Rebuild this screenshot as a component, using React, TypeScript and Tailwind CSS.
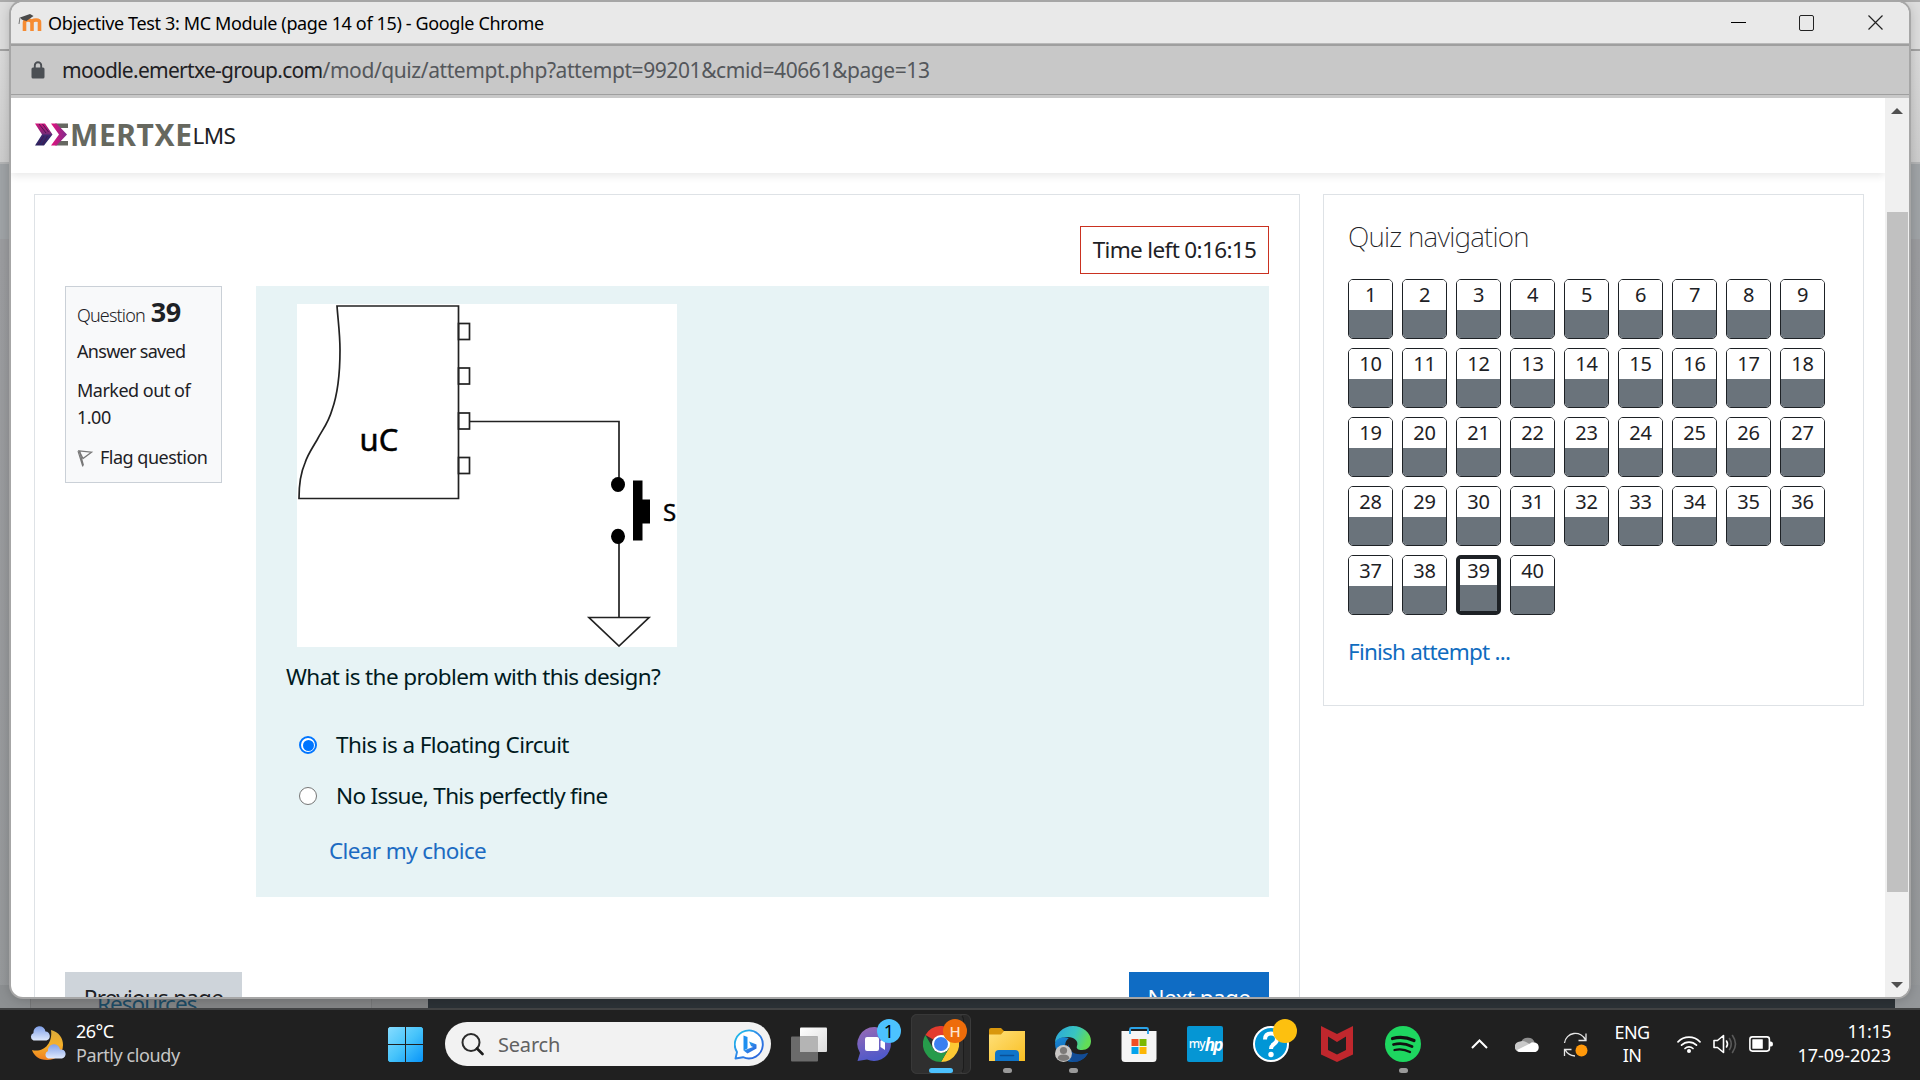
import React from "react";

const questions = Array.from({ length: 40 }, (_, i) => i + 1);
const CURRENT = 39;

/* ---------- desktop behind the window ---------- */

function Backdrop() {
  return (
    <div className="absolute inset-0 flex flex-col bg-[#9b9b9d]">
      <div className="h-[2px] bg-[#ababab]" />
      <div className="h-[47px] bg-[#dedede]" />
      <div className="h-[2px] bg-[#a3a3a3]" />
      <div className="h-[111px] bg-gradient-to-b from-[#dbdbdb] to-[#cecece]" />
      <div className="h-[2px] bg-[#b4b5b6]" />
      <div className="h-[75px] bg-[#a0a4a7]" />
      <div className="flex-1 bg-gradient-to-b from-[#9c9da0] to-[#96999b]" />
    </div>
  );
}

function BackdropFooter() {
  return (
    <div className="absolute inset-x-0 top-[985px] flex h-[23px] overflow-hidden">
      <div className="w-[30px] bg-[#8d9092]" />
      <div className="w-[342px] overflow-hidden border-x border-[#78797a] bg-[#858687] pl-[66px]">
        <div className="pt-[2px] text-[22.5px] leading-[34px] tracking-[-0.95px] text-[#1d4c66]">Resources</div>
      </div>
      <div className="w-[56px] bg-[#828384]" />
      <div className="w-[1467px] border-t-[14px] border-[#4b4f51] bg-[#2c3237]" />
      <div className="flex-1 bg-[#94979a]" />
    </div>
  );
}

/* ---------- browser window chrome ---------- */

function MoodleIcon() {
  return (
    <svg className="h-[20px] w-[24px]" viewBox="0 0 24 20">
      <path d="M6.500 18V9.500Q6.500 7 10 7T14 9.500V18M14 9.500Q14 7 18 7T21.500 9.500V18" fill="none" stroke="#f68b32" strokeWidth="3.600" />
      <path d="M2 4.500L12 1L15.500 3L8.500 8L4 6.800Z" fill="#4a4a4a" />
      <path d="M2 4.500L1 11" stroke="#777" strokeWidth="1" />
    </svg>
  );
}

function TitleBar() {
  return (
    <div className="flex h-[41px] shrink-0 items-center bg-[#e9e9e9] pl-[7px]">
      <MoodleIcon />
      <span className="ml-[6px] text-[18px] leading-[26px] tracking-[-0.36px] text-black">
        Objective Test 3: MC Module (page 14 of 15) - Google Chrome
      </span>
      <div className="ml-auto flex items-center gap-[53px] pr-[26px]">
        <div className="h-px w-[15px] bg-black" />
        <div className="h-[16px] w-[15px] rounded-[2px] border border-[#222]" />
        <svg className="ml-px h-[15px] w-[15px]" viewBox="0 0 15 15">
          <path d="M0.500 0.500L14.500 14.500M14.500 0.500L0.500 14.500" stroke="#222" strokeWidth="1.200" />
        </svg>
      </div>
    </div>
  );
}

function AddressBar() {
  return (
    <div className="flex h-[48px] shrink-0 items-center bg-[#c8c8c8] pl-[20px]">
      <svg className="h-[18px] w-[14px]" viewBox="0 0 14 18">
        <rect x="0.500" y="6.500" width="13" height="11" rx="1.500" fill="#4b4f54" />
        <path d="M3.800 7V4.500a3.200 3.200 0 0 1 6.400 0V7" fill="none" stroke="#4b4f54" strokeWidth="1.900" />
      </svg>
      <span className="ml-[17px] text-[21px] leading-[30px] text-[#54575b]">
        <span className="tracking-[-0.71px] text-[#1f2124]">moodle.emertxe-group.com</span>
        <span className="tracking-[-0.42px]">/mod/quiz/attempt.php?attempt=99201&amp;cmid=40661&amp;page=13</span>
      </span>
    </div>
  );
}

function Scrollbar() {
  return (
    <div className="flex w-[24px] flex-col items-center bg-[#f0f0f0]">
      <svg className="mt-[10px] h-[6px] w-[12px]" viewBox="0 0 12 6">
        <path d="M6 0L12 6H0Z" fill="#505050" />
      </svg>
      <div className="mt-[98px] h-[680px] w-[21px] bg-[#c1c1c1]" />
      <svg className="mt-[90px] h-[6px] w-[12px]" viewBox="0 0 12 6">
        <path d="M0 0H12L6 6Z" fill="#505050" />
      </svg>
    </div>
  );
}

/* ---------- page ---------- */

function SiteHeader() {
  return (
    <div className="relative z-10 flex h-[75px] shrink-0 items-start bg-white pl-[24px] pt-[20px] shadow-[0_3px_8px_rgba(0,0,0,0.09)]">
      <svg className="mt-[5px] h-[24px] w-[34px]" viewBox="0 0 34 24">
        <defs>
          <linearGradient id="chev" x1="0" y1="0" x2="0" y2="1">
            <stop offset="0" stopColor="#d4147c" />
            <stop offset="0.45" stopColor="#7a2a78" />
            <stop offset="0.550" stopColor="#3a2a70" />
            <stop offset="1" stopColor="#2a2560" />
          </linearGradient>
          <linearGradient id="sig" x1="0" y1="0" x2="1" y2="0">
            <stop offset="0" stopColor="#e5127d" />
            <stop offset="1" stopColor="#7d2c8c" />
          </linearGradient>
        </defs>
        <path d="M0 0.500H10L17.500 11.500L9 22.500H0L7 11.500Z" fill="url(#chev)" />
        <path d="M4 1L11 10M7.500 1L13.500 9M3 22L9 13M7 22L12.500 13" stroke="#45164f" strokeWidth="0.900" />
        <path d="M20 0.500H33V5H25ZM20 22.500H33V18H25Z" fill="#666861" />
        <path d="M16 0.500H21.500L32 11.500L21.500 22.500H16L24 11.500Z" fill="url(#sig)" />
      </svg>
      <span className="ml-[1px] text-[30px] font-bold leading-[34px] tracking-[0.6px] text-[#66685f]">MERTXE</span>
      <span className="text-[22.5px] leading-[35px] tracking-[-0.7px] text-[#1d2125]">LMS</span>
    </div>
  );
}

function QuestionInfo() {
  return (
    <div className="h-[197px] w-[157px] shrink-0 border border-[#cad0d7] bg-[#f8f9fa] pl-[11px] pt-[11px] text-[18px] leading-[27px] text-[#1d2125]">
      <div className="flex h-[27px] items-baseline">
        <span className="font-light tracking-[-0.85px]">Question</span>
        <span className="ml-[6px] text-[27px] font-bold leading-[27px] tracking-[-0.5px]">39</span>
      </div>
      <div className="mt-[13px] tracking-[-0.7px]">Answer saved</div>
      <div className="mt-[12px] tracking-[-0.5px]">
        Marked out of
        <br />
        1.00
      </div>
      <div className="mt-[13px] flex items-center">
        <svg className="h-[18px] w-[17px]" viewBox="0 0 17 18">
          <path d="M1 2L5.800 17.500M2.500 2L6.500 16.500" fill="none" stroke="#777" strokeWidth="1.100" />
          <path d="M2 1.800L14.500 3.200L6 9.500Z" fill="none" stroke="#777" strokeWidth="1.300" />
        </svg>
        <span className="ml-[6px] whitespace-nowrap tracking-[-0.5px]">Flag question</span>
      </div>
    </div>
  );
}

function CircuitDiagram() {
  return (
    <svg className="h-[343px] w-[380px] bg-white" viewBox="0 0 380 343">
      <g fill="none" stroke="#222" strokeWidth="1.700">
        <path d="M2 194.500H161.500V2H40C41 16 43 30 43 46C43 70 40 92 35 106C31 120 25 126 20 136C14 146 10 152 8 159C4 168 2 180 2 194.500Z" />
        <rect x="161.500" y="19.500" width="11" height="16" />
        <rect x="161.500" y="64" width="11" height="16" />
        <rect x="161.500" y="109" width="11" height="16" />
        <rect x="161.500" y="153.500" width="11" height="16" />
        <path d="M172.500 117.500H322V176M322 238V313.500" />
        <path d="M292 313.500H352L322 342Z" />
      </g>
      <ellipse cx="321" cy="180.500" rx="7" ry="7.600" />
      <ellipse cx="321" cy="232.300" rx="7" ry="7.600" />
      <rect x="336" y="176.500" width="9.500" height="60" />
      <rect x="345" y="195.500" width="8" height="24" />
      <text x="62.500" y="146.500" fontSize="31" fill="#000" stroke="#000" strokeWidth="0.500" fontFamily="'Noto Sans', sans-serif">uC</text>
      <text x="366" y="216.500" fontSize="24" fill="#000" stroke="#000" strokeWidth="0.400" fontFamily="'Noto Sans', sans-serif">S</text>
    </svg>
  );
}

function Choice({ label, checked }: { label: string; checked?: boolean }) {
  return (
    <label className="flex h-[34px] items-center">
      <span
        className={
          checked
            ? "flex h-[18px] w-[18px] items-center justify-center rounded-full border-2 border-[#0075ff] bg-white"
            : "h-[18px] w-[18px] rounded-full border-[1.5px] border-[#767676] bg-white"
        }
      >
        {checked && <span className="h-[11px] w-[11px] rounded-full bg-[#0075ff]" />}
      </span>
      <span className={checked ? "ml-[19px] tracking-[-0.6px]" : "ml-[19px] tracking-[-0.69px]"}>{label}</span>
    </label>
  );
}

function Formulation() {
  return (
    <div className="h-[611px] flex-1 bg-[#e7f3f5] pt-[18px] text-[22.5px] leading-[34px] text-[#001a1e]">
      <div className="ml-[41px] h-[343px]">
        <CircuitDiagram />
      </div>
      <p className="ml-[30px] mt-[13px] tracking-[-0.6px]">What is the problem with this design?</p>
      <div className="ml-[43px] mt-[34px] flex flex-col gap-[17px]">
        <Choice label="This is a Floating Circuit" checked />
        <Choice label="No Issue, This perfectly fine" />
      </div>
      <a className="ml-[73px] mt-[21px] block tracking-[-0.62px] text-[#1c6bc2]">Clear my choice</a>
    </div>
  );
}

function QuizCard() {
  return (
    <div className="w-[1266px] shrink-0 border border-[#dee2e6] px-[30px] pt-[31px]">
      <div className="flex justify-end">
        <div className="flex h-[48px] w-[189px] items-center justify-center border border-[#ca3120] text-[22.5px] leading-[34px] tracking-[-0.64px] text-[#1d2125]">
          Time left 0:16:15
        </div>
      </div>
      <div className="mt-[12px] flex gap-[34px]">
        <QuestionInfo />
        <Formulation />
      </div>
      <div className="mt-[75px] flex h-[56px] justify-between text-[22.5px] leading-[34px]">
        <button className="flex w-[177px] justify-center bg-[#ced4da] pt-[9px] tracking-[-0.75px] text-[#1d2125]">Previous page</button>
        <button className="flex w-[140px] justify-center bg-[#0f6cc4] pt-[9px] tracking-[-0.6px] text-white">Next page</button>
      </div>
    </div>
  );
}

function QuizNavigation() {
  return (
    <div className="h-[512px] w-[541px] shrink-0 border border-[#dee2e6] pl-[24px] pt-[24px] text-[#1d2125]">
      <h2 className="text-[28px] font-extralight leading-[34px] tracking-[-0.75px]">Quiz navigation</h2>
      <div className="mt-[26px] grid w-[477px] grid-cols-9 gap-[9px]">
        {questions.map((n) => (
          <div
            key={n}
            className={
              n === CURRENT
                ? "flex h-[60px] flex-col overflow-hidden rounded-[5px] border-4 border-[#1d2125] text-center text-[20px] leading-[24px] tracking-[-0.3px]"
                : "flex h-[60px] flex-col overflow-hidden rounded-[5px] border border-[#1d2125] text-center text-[20px] leading-[30px] tracking-[-0.3px]"
            }
          >
            <span className="flex-1 basis-0 bg-white">{n}</span>
            <span className="flex-1 basis-0 bg-[#6a737b]" />
          </div>
        ))}
      </div>
      <a className="mt-[20px] block text-[22.5px] leading-[34px] tracking-[-0.78px] text-[#0f6cbf]">Finish attempt ...</a>
    </div>
  );
}

function BrowserWindow() {
  return (
    <div className="absolute left-[11px] top-[2px] flex h-[995px] w-[1898px] flex-col overflow-hidden rounded-[12px] bg-white shadow-[0_0_0_2px_#a6a6a6,0_2px_14px_rgba(0,0,0,0.25)]">
      <TitleBar />
      <div className="h-px shrink-0 bg-[#b9b9b9]" />
      <div className="h-[2px] shrink-0 bg-[#9f9f9f]" />
      <AddressBar />
      <div className="h-px shrink-0 bg-[#9f9f9f]" />
      <div className="h-[3px] shrink-0 bg-[#c8c8c8]" />
      <div className="flex h-[899px] shrink-0">
        <div className="flex h-[899px] w-[1874px] flex-col overflow-hidden">
          <SiteHeader />
          <div className="flex shrink-0 items-start gap-[23px] pl-[23px] pt-[21px]">
            <QuizCard />
            <QuizNavigation />
          </div>
        </div>
        <Scrollbar />
      </div>
    </div>
  );
}

/* ---------- taskbar ---------- */

function WeatherIcon() {
  return (
    <svg className="h-[36px] w-[38px]" viewBox="0 0 38 36">
      <defs>
        <linearGradient id="moon" x1="0" y1="0" x2="0" y2="1">
          <stop offset="0" stopColor="#d9a93a" />
          <stop offset="0.500" stopColor="#f6b12a" />
          <stop offset="1" stopColor="#f07f1d" />
        </linearGradient>
        <linearGradient id="cl" x1="0" y1="0" x2="0" y2="1">
          <stop offset="0" stopColor="#7f9fe8" />
          <stop offset="1" stopColor="#dfe9fc" />
        </linearGradient>
      </defs>
      <path d="M22 4C30 6 34 12 34 19C34 28 27 34 18 34C10 34 5 30 3 24C14 27 24 18 22 4Z" fill="url(#moon)" />
      <path d="M4.500 14.500a4 4 0 0 1 0-7.500a6 6 0 0 1 12-1.500a4.600 4.600 0 0 1 1 9Z" fill="url(#cl)" />
      <path d="M19 32.500a4 4 0 0 1 0-7.500a6 6 0 0 1 12-1.500a4.600 4.600 0 0 1 2 9Z" fill="url(#cl)" />
    </svg>
  );
}

function WindowsLogo() {
  return (
    <svg className="h-[35px] w-[35px]" viewBox="0 0 35 35">
      <defs>
        <linearGradient id="win" x1="0" y1="0" x2="1" y2="1">
          <stop offset="0" stopColor="#86dcff" />
          <stop offset="0.500" stopColor="#47c4fb" />
          <stop offset="1" stopColor="#0894f8" />
        </linearGradient>
      </defs>
      <path d="M1.500 0H17V17H0V1.500ZM18 0H33.500L35 1.500V17H18ZM0 18H17V35H1.500L0 33.500ZM18 18H35V33.500L33.500 35H18Z" fill="url(#win)" />
    </svg>
  );
}

function BingIcon() {
  return (
    <svg className="h-[31px] w-[31px]" viewBox="0 0 31 31">
      <defs>
        <linearGradient id="bing" x1="0" y1="0" x2="1" y2="1">
          <stop offset="0" stopColor="#1fc8ea" />
          <stop offset="0.500" stopColor="#2f86e8" />
          <stop offset="1" stopColor="#2a5cd8" />
        </linearGradient>
      </defs>
      <path d="M1.500 29.500L3 23A14 14 0 1 1 9 28.200Z" fill="#fff" stroke="url(#bing)" strokeWidth="1.900" strokeLinejoin="round" />
      <path d="M9.500 6.500L13.500 8V19.500L9.500 21.500Z" fill="#1d8ff0" />
      <path d="M9.500 21.500L13.500 24.500L22.500 19.500V15.500L15 12.500L17 17L19 18Z" fill="url(#bing)" />
    </svg>
  );
}

function TaskViewIcon() {
  return (
    <svg className="h-[35px] w-[36px]" viewBox="0 0 36 35">
      <defs>
        <linearGradient id="tv" x1="0" y1="0" x2="1" y2="1">
          <stop offset="0" stopColor="#fff" />
          <stop offset="1" stopColor="#dcdcdc" />
        </linearGradient>
      </defs>
      <rect x="9" y="0.500" width="27" height="24.500" rx="1" fill="url(#tv)" />
      <rect x="0" y="9.500" width="27" height="25" rx="1" fill="#6b6b6b" />
      <rect x="9" y="9.500" width="18" height="15.500" fill="#b4b4b4" />
    </svg>
  );
}

function ChatIcon() {
  return (
    <svg className="h-[36px] w-[36px]" viewBox="0 0 36 36">
      <defs>
        <linearGradient id="chat" x1="0" y1="0" x2="0.300" y2="1">
          <stop offset="0" stopColor="#9a6bb5" />
          <stop offset="1" stopColor="#5059c9" />
        </linearGradient>
      </defs>
      <path d="M18 1A17 17 0 1 1 10 33.500L0.500 35L3 27A17 17 0 0 1 18 1Z" fill="url(#chat)" />
      <rect x="8" y="11" width="14" height="14" rx="2" fill="#fff" />
      <path d="M23.500 15L28 12V24L23.500 21Z" fill="#fff" />
    </svg>
  );
}

function ChromeIcon() {
  return (
    <svg className="h-[36px] w-[36px]" viewBox="0 0 36 36">
      <path d="M18 18L2.400 9A18 18 0 0 1 33.600 9Z" fill="#e33b2e" />
      <path d="M18 9H33.600A18 18 0 0 1 18 36L25.800 22.500Z" fill="#fcc934" />
      <path d="M18 36A18 18 0 0 1 2.400 9L10.200 22.500A9 9 0 0 0 25.800 22.500Z" fill="#269b4b" />
      <circle cx="18" cy="18" r="9" fill="#fff" />
      <circle cx="18" cy="18" r="7" fill="#3b7ff0" />
    </svg>
  );
}

function FolderIcon() {
  return (
    <svg className="h-[36px] w-[36px]" viewBox="0 0 36 36">
      <defs>
        <linearGradient id="fold" x1="0" y1="0" x2="1" y2="1">
          <stop offset="0" stopColor="#ffe07a" />
          <stop offset="1" stopColor="#f9bf22" />
        </linearGradient>
      </defs>
      <path d="M0 4Q0 2 2 2H12L15 5H34Q36 5 36 7V12H0Z" fill="#d9970d" />
      <path d="M0 8.500H12L15 5H36V35H0Z" fill="url(#fold)" />
      <path d="M6 35V28Q6 24 10 24H26Q30 24 30 28V35Z" fill="#0f74c9" />
      <path d="M11.500 29.500H24.500" stroke="#0a4f96" strokeWidth="1.600" strokeLinecap="round" />
    </svg>
  );
}

function EdgeIcon() {
  return (
    <svg className="h-[36px] w-[36px]" viewBox="0 0 36 36">
      <defs>
        <linearGradient id="eg1" x1="0" y1="0" x2="1" y2="0.300">
          <stop offset="0" stopColor="#2aa5dc" />
          <stop offset="0.600" stopColor="#39c5c0" />
          <stop offset="1" stopColor="#62dc56" />
        </linearGradient>
        <linearGradient id="eg2" x1="0" y1="0" x2="0.500" y2="1">
          <stop offset="0" stopColor="#1a8ad8" />
          <stop offset="1" stopColor="#0c59a4" />
        </linearGradient>
      </defs>
      <path d="M0 17C0 8 8 0 18 0C28 0 36 7 36 15C36 21 32 24 27 24C23 24 21 22.500 22 20C24 15 19 11 13 11C7 11 2 13 0 17Z" fill="url(#eg1)" />
      <path d="M0 17C2 12 8 10 14 12C11 14 9 18 11 24C13 30 20 33 33 27C30 33 24 36 18 36C8 36 0 28 0 17Z" fill="url(#eg2)" />
      <path d="M14 18C13 25 20 31 33 27C30 33 24 36 19 36C12 33 10 24 14 18Z" fill="#124c96" />
      <circle cx="8.500" cy="27.500" r="8.500" fill="#c9c7c5" />
      <circle cx="8.500" cy="24.500" r="3.600" fill="#7d7a78" />
      <path d="M2.500 32.500Q3 28.500 8.500 28.500T14.500 32.500Q12 35 8.500 35T2.500 32.500Z" fill="#7d7a78" />
    </svg>
  );
}

function StoreIcon() {
  return (
    <svg className="h-[36px] w-[36px]" viewBox="0 0 36 36">
      <path d="M0.500 5H35.500V32.500Q35.500 36 32 36H4Q0.500 36 0.500 32.500Z" fill="#f5f5f5" />
      <path d="M9 8V3.500Q9 2 10.500 2H25.500Q27 2 27 3.500V8" fill="none" stroke="#2ba3e8" strokeWidth="1.900" />
      <rect x="10.500" y="13" width="7" height="7" fill="#f04e26" />
      <rect x="18.500" y="13" width="7" height="7" fill="#7cb802" />
      <rect x="10.500" y="21" width="7" height="7" fill="#04a3ec" />
      <rect x="18.500" y="21" width="7" height="7" fill="#fcb605" />
    </svg>
  );
}

function HpIcon() {
  return (
    <div className="flex h-[36px] w-[36px] items-center justify-center rounded-[2px] bg-[#0596d4] italic leading-none text-white">
      <span className="text-[12px] font-medium not-italic tracking-[-0.8px]">my</span>
      <span className="text-[17px] font-bold tracking-[-2px]">hp</span>
    </div>
  );
}

function HelpIcon() {
  return (
    <svg className="h-[36px] w-[36px]" viewBox="0 0 36 36">
      <circle cx="18" cy="18" r="17" fill="#0096d6" stroke="#fff" strokeWidth="2" />
      <path d="M12 13.500Q12 7.500 18 7.500T24 13Q24 16 21 18T18 23" fill="none" stroke="#fff" strokeWidth="4" />
      <circle cx="18" cy="28.500" r="2.700" fill="#fff" />
    </svg>
  );
}

function McAfeeIcon() {
  return (
    <svg className="h-[36px] w-[32px]" viewBox="0 0 32 36">
      <path d="M0 0L16 8L32 0V28.500L16 36L0 28.500ZM7 10.500V24L16 28.500L25 24V10.500L16 16Z" fill="#c0272d" fillRule="evenodd" />
    </svg>
  );
}

function SpotifyIcon() {
  return (
    <svg className="h-[36px] w-[36px]" viewBox="0 0 36 36">
      <circle cx="18" cy="18" r="18" fill="#1ed760" />
      <g fill="none" stroke="#111" strokeLinecap="round">
        <path d="M7.500 12.500Q18 9.500 29 14.500" strokeWidth="3.200" />
        <path d="M8.500 18.500Q18 16 27 20.500" strokeWidth="2.800" />
        <path d="M9.500 24Q17.500 22 25 26" strokeWidth="2.300" />
      </g>
    </svg>
  );
}

function AppSlot({ children, badge, running }: { children: React.ReactNode; badge?: React.ReactNode; running?: boolean }) {
  return (
    <div className="relative flex h-[70px] w-[66px] items-center justify-center">
      {children}
      {badge}
      {running && <div className="absolute bottom-[6px] left-[29px] h-[5px] w-[9px] rounded-full bg-[#9a9a9a]" />}
    </div>
  );
}

function Taskbar() {
  return (
    <div className="absolute inset-x-0 bottom-0 flex h-[72px] items-center border-t-2 border-[#414243] bg-[#202020] pb-[2px]">
      <div className="flex h-[70px] w-[388px] items-center pl-[29px]">
        <WeatherIcon />
        <div className="ml-[9px] pb-[2px] text-[18px] leading-[24px]">
          <div className="tracking-[-0.5px] text-white">26°C</div>
          <div className="tracking-[-0.4px] text-[#c6c6c6]">Partly cloudy</div>
        </div>
      </div>
      <WindowsLogo />
      <div className="ml-[22px] flex h-[44px] w-[326px] items-center rounded-full bg-[#f2f2f2] pl-[16px] pr-[6px]">
        <svg className="h-[23px] w-[23px]" viewBox="0 0 23 23">
          <circle cx="10" cy="9.500" r="8.500" fill="none" stroke="#2b2b2b" strokeWidth="2" />
          <path d="M16 15.500L21.500 21" stroke="#1d1d1d" strokeWidth="2.600" strokeLinecap="round" />
        </svg>
        <span className="ml-[14px] pt-px text-[20px] leading-[28px] tracking-[-0.2px] text-[#616161]">Search</span>
        <span className="ml-auto">
          <BingIcon />
        </span>
      </div>
      <div className="ml-[5px] flex">
        <AppSlot>
          <TaskViewIcon />
        </AppSlot>
        <AppSlot
          badge={
            <div className="absolute left-[35px] top-[10px] flex h-[24px] w-[24px] items-center justify-center rounded-full bg-[#4cc2ff] text-[18px] leading-none text-black">
              1
            </div>
          }
        >
          <ChatIcon />
        </AppSlot>
        <div className="relative flex h-[70px] w-[66px] items-center justify-center">
          <div className="absolute left-[3px] top-[5px] h-[60px] w-[60px] rounded-[6px] border border-[#3b3b3b] bg-[#2a2a2a]" />
          <div className="absolute left-[3px] top-[5px] h-[60px] w-[53px] rounded-[6px] border border-[#383838] border-r-[#1c1c1c] bg-[#2f2f2f]" />
          <div className="relative">
            <ChromeIcon />
          </div>
          <div className="absolute left-[35px] top-[10px] flex h-[24px] w-[24px] items-center justify-center rounded-full bg-[#ee6c0a] text-[15px] font-medium leading-none text-[#fde3d0]">
            H
          </div>
          <div className="absolute bottom-[6px] left-[21px] h-[5px] w-[24px] rounded-full bg-[#4cc2ff]" />
        </div>
        <AppSlot running>
          <FolderIcon />
        </AppSlot>
        <AppSlot running>
          <EdgeIcon />
        </AppSlot>
        <AppSlot>
          <StoreIcon />
        </AppSlot>
        <AppSlot>
          <HpIcon />
        </AppSlot>
        <AppSlot badge={<div className="absolute left-[35px] top-[10px] h-[24px] w-[24px] rounded-full bg-[#fdc00f]" />}>
          <HelpIcon />
        </AppSlot>
        <AppSlot>
          <McAfeeIcon />
        </AppSlot>
        <AppSlot running>
          <SpotifyIcon />
        </AppSlot>
      </div>

      <div className="ml-[19px] flex flex-1 items-center text-white">
        <div className="flex w-[48px] justify-center">
          <svg className="h-[10px] w-[17px]" viewBox="0 0 17 10">
            <path d="M1 9L8.500 1.500L16 9" fill="none" stroke="#fff" strokeWidth="2" />
          </svg>
        </div>
        <div className="flex w-[48px] justify-center">
          <svg className="h-[17px] w-[25px]" viewBox="0 0 25 17">
            <path d="M6 7A7 6.500 0 0 1 19.500 6L12 10Z" fill="#8f8f8f" />
            <path d="M5 16A5 5 0 0 1 5 5.500Q8 4 12 6.500L20 11L12 16Z" fill="#c9c9c9" />
            <path d="M2 14L15 7.500Q17 5.500 20 6.500A5 5 0 0 1 20.500 16H5Q3 16 2 14Z" fill="#fff" />
          </svg>
        </div>
        <div className="flex w-[48px] justify-center">
          <svg className="h-[25px] w-[25px]" viewBox="0 0 25 25">
            <path d="M1.500 11A11 11 0 0 1 22.500 8M23 1.500V8.500H15.500M12 24Q5 23.500 2 17.500M1.500 24V17.500H8.500" fill="none" stroke="#e6e6e6" strokeWidth="1.300" />
            <circle cx="18.500" cy="18.500" r="6" fill="#ff980a" />
          </svg>
        </div>
        <div className="w-[66px] pb-px text-center text-[18px] leading-[23px] tracking-[-0.6px]">
          ENG
          <br />
          IN
        </div>
        <div className="ml-[6px] flex w-[36px] justify-center">
          <svg className="h-[18px] w-[24px]" viewBox="0 0 24 18">
            <g fill="none" stroke="#fff" strokeWidth="1.700" strokeLinecap="round">
              <path d="M1 6.800A15.500 15.500 0 0 1 23 6.800" />
              <path d="M4.500 10.200A10.600 10.600 0 0 1 19.500 10.200" />
              <path d="M8 13.500A5.800 5.800 0 0 1 16 13.500" />
            </g>
            <circle cx="12" cy="16" r="2" fill="#fff" />
          </svg>
        </div>
        <div className="flex w-[36px] justify-center">
          <svg className="h-[20px] w-[24px]" viewBox="0 0 24 20">
            <g fill="none" strokeWidth="1.600" strokeLinecap="round" strokeLinejoin="round">
              <path d="M1 6.500H4.500L10.500 1.500V18.500L4.500 13.500H1Z" stroke="#fff" />
              <path d="M13.500 7Q15.500 10 13.500 13" stroke="#fff" />
              <path d="M16.500 4.500Q20 10 16.500 15.500M19.500 1.500Q25.500 10 19.500 18.500" stroke="#5a5a5a" />
            </g>
          </svg>
        </div>
        <div className="flex w-[36px] justify-center">
          <svg className="h-[16px] w-[24px]" viewBox="0 0 24 16">
            <rect x="0.900" y="0.900" width="19.500" height="14.200" rx="2.500" fill="none" stroke="#fff" strokeWidth="1.600" />
            <rect x="3.300" y="3.300" width="10.500" height="9.400" rx="0.500" fill="#fff" />
            <path d="M20.500 5.500H22Q24 5.500 24 8T22 10.500H20.500Z" fill="#fff" />
          </svg>
        </div>
        <div className="ml-auto pb-[2px] pr-[29px] text-right text-[18px] leading-[24px] tracking-[-0.05px]">
          <div className="tracking-[-0.5px]">11:15</div>
          <div>17-09-2023</div>
        </div>
      </div>
    </div>
  );
}

export default function App() {
  return (
    <div className="relative h-[1080px] w-[1920px] overflow-hidden font-['Noto_Sans','Open_Sans',sans-serif]">
      <Backdrop />
      <BackdropFooter />
      <BrowserWindow />
      <Taskbar />
    </div>
  );
}
